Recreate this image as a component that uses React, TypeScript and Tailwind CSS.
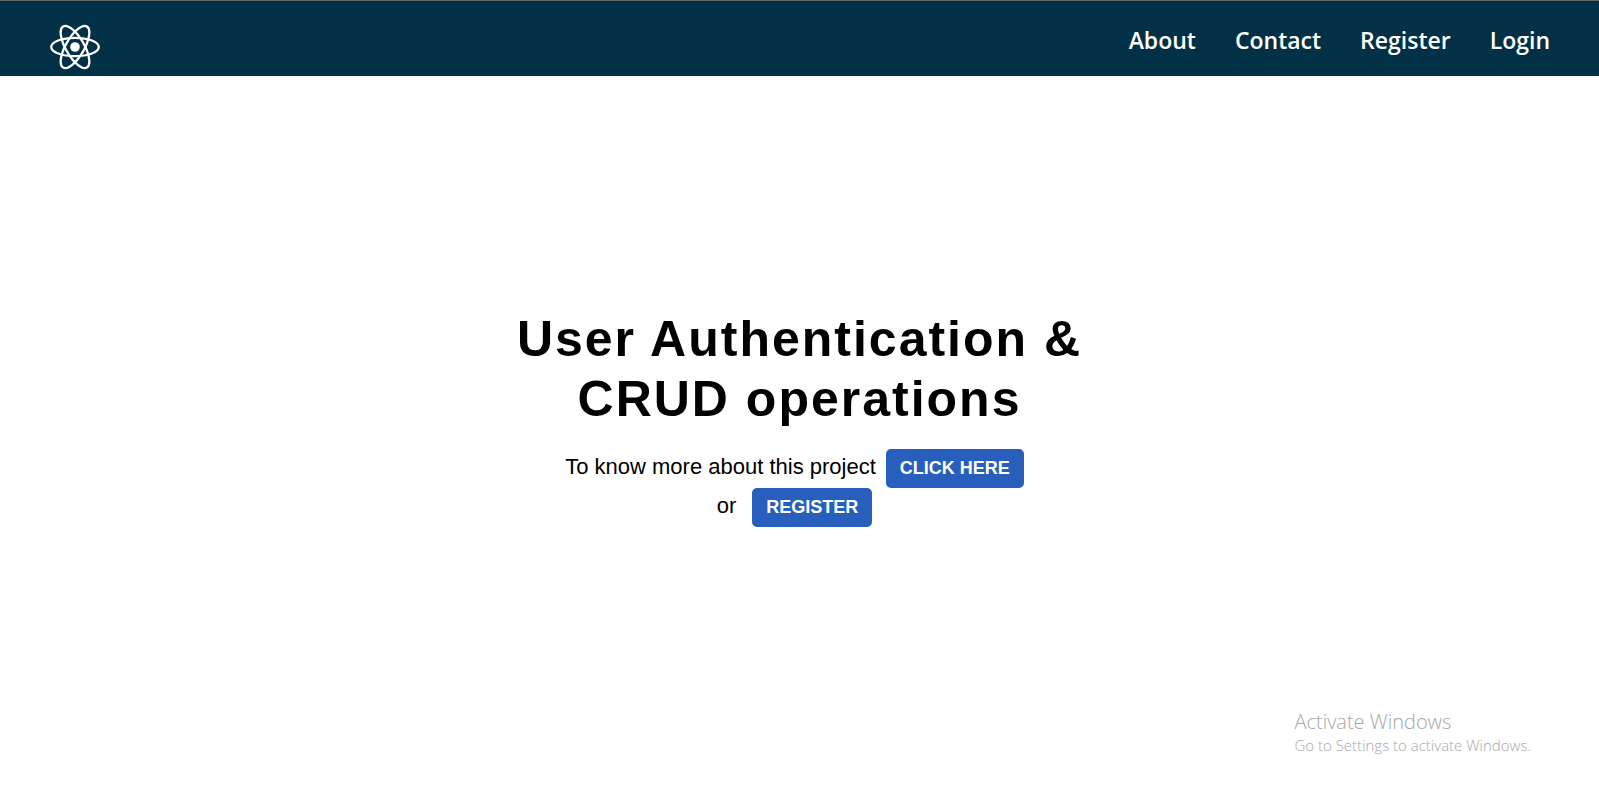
const navItems = ["About", "Contact", "Register", "Login"];

function AtomLogo() {
  return (
    <svg viewBox="-25 -23 50 46" className="h-[46px] w-[50px]" fill="none" stroke="white" strokeWidth="2.3" aria-hidden="true">
      <circle r="4.8" fill="white" stroke="none" />
      <ellipse rx="23.8" ry="9.2" />
      <ellipse rx="23.8" ry="9.2" transform="rotate(60)" />
      <ellipse rx="23.8" ry="9.2" transform="rotate(120)" />
    </svg>
  );
}

const buttonClass =
  "mx-[10px] inline-block rounded-[5px] bg-[#285fbd] px-[14px] text-[18px] leading-[39px] font-bold text-white uppercase";

export default function App() {
  return (
    <div className="flex min-h-screen flex-col bg-white font-['Liberation_Sans',Arial,sans-serif] text-black">
      <header className="flex items-start justify-between border-t border-[#666666] bg-[#023047] pt-[23px] pr-[49px] pb-[6px] pl-[50px]">
        <a href="#home" aria-label="Home">
          <AtomLogo />
        </a>
        <nav className="flex gap-[39px] font-['Open_Sans','Noto_Sans',sans-serif] text-[23px] leading-[32px] font-semibold text-white">
          {navItems.map((item) => (
            <a key={item} href={"#" + item.toLowerCase()}>
              {item}
            </a>
          ))}
        </nav>
      </header>
      <main className="flex flex-1 flex-col items-center justify-center pb-[32px] text-center">
        <h1 className="max-w-[600px] text-[50px] leading-[60px] font-bold tracking-[2px]">
          User Authentication &amp; CRUD operations
        </h1>
        <p className="mt-[20px] text-[22px] leading-[28px]">
          To know more about this project
          <button type="button" className={buttonClass}>Click here</button>
          <br />
          or{" "}
          <button type="button" className={buttonClass}>Register</button>
        </p>
      </main>
      <aside className="absolute right-[68px] bottom-[36px] font-['Open_Sans','Noto_Sans',sans-serif] font-light text-[#a8a8a8]">
        <p className="text-[20px] leading-[26px]">Activate Windows</p>
        <p className="text-[15px] leading-[20px]">Go to Settings to activate Windows.</p>
      </aside>
    </div>
  );
}
